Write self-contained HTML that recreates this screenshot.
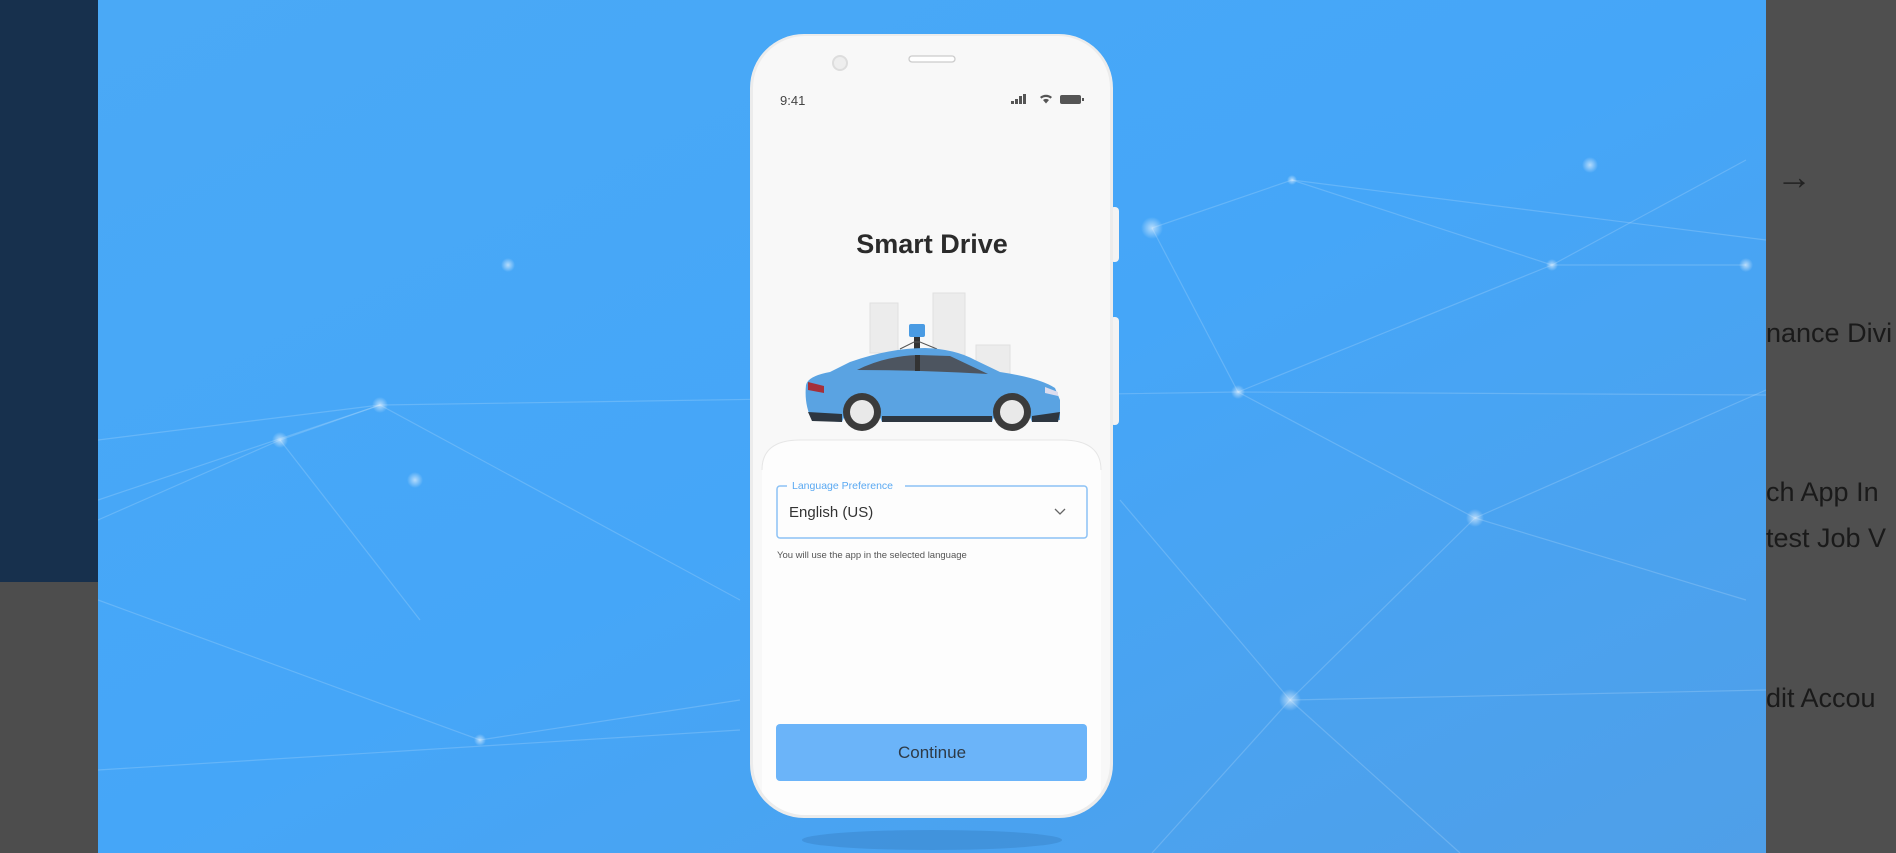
<!DOCTYPE html>
<html><head><meta charset="utf-8"><style>
html,body{margin:0;padding:0;width:1896px;height:853px;overflow:hidden;font-family:"Liberation Sans",sans-serif}
.abs{position:absolute}
</style></head><body>
<div class="abs" style="left:0;top:0;width:98px;height:582px;background:#17304d"></div>
<div class="abs" style="left:0;top:582px;width:98px;height:271px;background:#4d4d4d"></div>
<div class="abs" style="left:1766px;top:0;width:130px;height:853px;background:#4f4f4f;overflow:hidden;color:#1a1a1a;font-size:27px;white-space:nowrap">
 <div class="abs" style="left:10px;top:156px;font-size:36px;color:#222">→</div>
 <div class="abs" style="left:0;top:318px">nance Divi</div>
 <div class="abs" style="left:0;top:477px">ch App In</div>
 <div class="abs" style="left:0;top:523px">test Job V</div>
 <div class="abs" style="left:0;top:683px">dit Accou</div>
</div>
<svg class="abs" style="left:98px;top:0" width="1668" height="853" viewBox="98 0 1668 853">
 <defs>
  <linearGradient id="bg" x1="0" y1="0" x2="1" y2="1">
   <stop offset="0" stop-color="#4aa9f6"/><stop offset="0.5" stop-color="#45a6f8"/><stop offset="1" stop-color="#4f9fe8"/>
  </linearGradient>
  <radialGradient id="gl"><stop offset="0" stop-color="#fff" stop-opacity=".6"/><stop offset="1" stop-color="#fff" stop-opacity="0"/></radialGradient>
  <clipPath id="ph"><rect x="753" y="36" width="357" height="779" rx="52"/></clipPath>
 </defs>
 <rect x="98" y="0" width="1668" height="853" fill="url(#bg)"/>
 <g stroke="#d5ebff" stroke-opacity=".22" stroke-width="1.2" fill="none">
  <path d="M98 440 L380 405 L1238 392 L1766 395"/>
  <path d="M98 500 L380 405 L740 600"/>
  <path d="M380 405 L280 440 L98 520"/>
  <path d="M1152 228 L1292 180 L1552 265 L1746 265"/>
  <path d="M1152 228 L1238 392 L1475 518 L1290 700 L1152 853"/>
  <path d="M1238 392 L1552 265"/>
  <path d="M1475 518 L1766 390"/>
  <path d="M1290 700 L1766 690"/>
  <path d="M1290 700 L1460 853"/>
  <path d="M1292 180 L1766 240"/>
  <path d="M98 600 L480 740 L740 700"/>
  <path d="M280 440 L420 620"/>
  <path d="M1552 265 L1746 160"/>
  <path d="M1475 518 L1746 600"/>
  <path d="M98 770 L740 730"/>
  <path d="M1120 500 L1290 700"/>
 </g>
 <g fill="url(#gl)">
  <circle cx="380" cy="405" r="8"/><circle cx="1238" cy="392" r="7"/><circle cx="1152" cy="228" r="11"/>
  <circle cx="1292" cy="180" r="5"/><circle cx="1552" cy="265" r="6"/><circle cx="1475" cy="518" r="9"/>
  <circle cx="1290" cy="700" r="11"/><circle cx="1746" cy="265" r="7"/><circle cx="1590" cy="165" r="8"/>
  <circle cx="280" cy="440" r="8"/><circle cx="508" cy="265" r="7"/><circle cx="415" cy="480" r="8"/><circle cx="480" cy="740" r="6"/>
 </g>
 <ellipse cx="932" cy="840" rx="130" ry="10" fill="#2d6fb0" opacity=".3"/>
 <!-- phone -->
 <rect x="1110" y="207" width="9" height="55" rx="4" fill="#f3f3f3"/>
 <rect x="1110" y="317" width="9" height="108" rx="4" fill="#f3f3f3"/>
 <rect x="750" y="34" width="363" height="784" rx="54" fill="#ececec"/>
 <rect x="753" y="36" width="357" height="779" rx="52" fill="#f8f8f8"/>
 <circle cx="840" cy="63" r="7" fill="#eee" stroke="#ddd" stroke-width="2"/>
 <rect x="909" y="56" width="46" height="6" rx="3" fill="#fff" stroke="#ccc" stroke-width="1.3"/>
 <text x="780" y="105" font-family="Liberation Sans" font-size="13" fill="#444">9:41</text>
 <g fill="#555"><rect x="1011" y="101" width="3" height="3"/><rect x="1015" y="99" width="3" height="5"/><rect x="1019" y="96" width="3" height="8"/><rect x="1023" y="94" width="3" height="10"/>
 <path d="M1040 97 a9 9 0 0 1 12 0 l-1.5 1.6 a7 7 0 0 0 -9 0z M1043 100 a5 5 0 0 1 6 0 l-3 3.5z"/>
 <rect x="1060" y="95" width="21" height="9" rx="2"/><rect x="1082" y="98" width="2" height="3"/></g>
 <text x="932" y="253" text-anchor="middle" font-family="Liberation Sans" font-weight="bold" font-size="27" fill="#2b2b2b">Smart Drive</text>
 <!-- buildings -->
 <g fill="#ececec" stroke="#e0e0e0"><rect x="870" y="303" width="28" height="50"/><rect x="933" y="293" width="32" height="62"/><rect x="976" y="345" width="34" height="33"/></g>
 <!-- car -->
 <rect x="909" y="324" width="16" height="13" rx="2" fill="#4a9be3"/><rect x="914" y="337" width="6" height="12" fill="#333"/>
 <path d="M900 349 L914 342 L920 342 L937 349" stroke="#555" fill="none"/>
 <path d="M806 385 Q808 376 830 372 L850 362 Q890 348 925 348 Q955 349 975 360 L1000 372 Q1040 378 1055 388 L1060 400 L1060 420 L1032 422 A21 21 0 0 0 992 422 L882 422 A21 21 0 0 0 842 422 L812 420 Q804 405 806 385Z" fill="#5aa3e2"/>
 <path d="M857 370 Q885 356 918 355 L950 356 L988 374 Q920 370 857 370Z" fill="#4d5560"/>
 <rect x="915" y="355" width="5" height="16" fill="#333"/>
 <path d="M808 382 L824 386 L824 393 L808 390Z" fill="#a5303a"/>
 <path d="M1045 387 L1058 392 L1058 396 L1045 393Z" fill="#dde"/>
 <path d="M808 412 L842 414 L842 422 L812 421Z M882 416 L992 416 L992 422 L882 422Z M1032 416 L1060 412 L1058 422 L1032 422Z" fill="#2d3640"/>
 <g><circle cx="862" cy="412" r="19" fill="#3b3b3b"/><circle cx="862" cy="412" r="12" fill="#e9e9e9"/>
 <circle cx="1012" cy="412" r="19" fill="#3b3b3b"/><circle cx="1012" cy="412" r="12" fill="#e9e9e9"/></g>
 <!-- bottom card -->
 <g clip-path="url(#ph)">
 <path d="M762 470 Q762 440 800 440 L1062 440 Q1101 440 1101 470 L1101 830 L762 830 Z" fill="#fdfdfd"/>
 </g>
 <path d="M762 470 Q762 440 800 440 L1062 440 Q1101 440 1101 470" fill="none" stroke="#e6e6e6"/>
 <rect x="777" y="486" width="310" height="52" rx="3" fill="none" stroke="#8cc2f5" stroke-width="1.5"/>
 <rect x="787" y="480" width="118" height="12" fill="#fdfdfd"/>
 <text x="792" y="489" font-family="Liberation Sans" font-size="10.5" fill="#5aa9f2">Language Preference</text>
 <text x="789" y="517" font-family="Liberation Sans" font-size="15" fill="#333">English (US)</text>
 <path d="M1055 509 L1060 514 L1065 509" stroke="#666" stroke-width="1.3" fill="none"/>
 <text x="777" y="558" font-family="Liberation Sans" font-size="9.5" fill="#555">You will use the app in the selected language</text>
 <rect x="776" y="724" width="311" height="57" rx="4" fill="#6bb4f9"/>
 <text x="932" y="758" text-anchor="middle" font-family="Liberation Sans" font-size="17" fill="#2e3a46">Continue</text>
</svg>
</body></html>
